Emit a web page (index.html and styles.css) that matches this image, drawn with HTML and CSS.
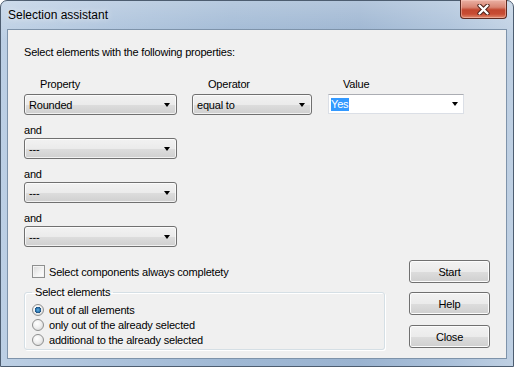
FILE: index.html
```html
<html lang="en">
<head>
  <meta charset="UTF-8">
  <title>Selection assistant</title>
  <link rel="stylesheet" href="styles.css">
</head>
<body>
  <div class="window">
    <div class="titlebar">
      <span class="title">Selection assistant</span>
      <button class="close-btn" title="Close">
        <svg width="13" height="11" viewBox="0 0 13 11">
          <path d="M2.5 1.5 L10.5 9.5 M10.5 1.5 L2.5 9.5" stroke="#4a1d15" stroke-width="4.2" stroke-linecap="round"/>
          <path d="M2.5 1.5 L10.5 9.5 M10.5 1.5 L2.5 9.5" stroke="#ffffff" stroke-width="2.4" stroke-linecap="round"/>
        </svg>
      </button>
    </div>

    <div class="client">
      <p class="intro">Select elements with the following properties:</p>

      <div class="criteria">
        <div class="field field-property">
          <span class="col-label">Property</span>
          <div class="combo combo-wide"><span>Rounded</span><i class="arrow"></i></div>
        </div>
        <div class="field field-operator">
          <span class="col-label">Operator</span>
          <div class="combo combo-op"><span>equal to</span><i class="arrow"></i></div>
        </div>
        <div class="field field-value">
          <span class="col-label">Value</span>
          <div class="combo-edit"><span class="selected-text">Yes</span><i class="arrow"></i></div>
        </div>
      </div>

      <div class="field and-field">
        <span class="and-label">and</span>
        <div class="combo combo-wide"><span>---</span><i class="arrow"></i></div>
      </div>
      <div class="field and-field">
        <span class="and-label">and</span>
        <div class="combo combo-wide"><span>---</span><i class="arrow"></i></div>
      </div>
      <div class="field and-field">
        <span class="and-label">and</span>
        <div class="combo combo-wide"><span>---</span><i class="arrow"></i></div>
      </div>

      <div class="bottom">
        <div class="left-col">
          <label class="check-row"><span class="checkbox"></span>Select components always completety</label>
          <fieldset class="group">
            <legend>Select elements</legend>
            <div class="radio-row"><span class="radio checked"></span>out of all elements</div>
            <div class="radio-row"><span class="radio"></span>only out of the already selected</div>
            <div class="radio-row"><span class="radio"></span>additional to the already selected</div>
          </fieldset>
        </div>
        <div class="buttons">
          <button class="btn">Start</button>
          <button class="btn">Help</button>
          <button class="btn">Close</button>
        </div>
      </div>
    </div>
  </div>
</body>
</html>
```

FILE: styles.css
```css
html,
body {
  margin: 0;
  background: #ffffff;
}

.window {
  width: 514px;
  height: 367px;
  box-sizing: border-box;
  display: flex;
  flex-direction: column;
  padding: 0 6px 7px 6px;
  border: 1px solid #4d5d70;
  border-radius: 7px 7px 0 0;
  background:
    linear-gradient(to bottom, rgba(255, 255, 255, 0.25), rgba(255, 255, 255, 0) 40px),
    linear-gradient(to right, #bccfe4 0%, #adc3dc 20%, #9fb8d4 45%, #9ab3d0 70%, #abc1da 88%, #bfd0e3 100%);
  font-family: "Liberation Sans", Arial, sans-serif;
  font-size: 11px;
  letter-spacing: -0.2px;
  color: #000;
}

.titlebar {
  height: 28px;
  display: flex;
  align-items: flex-start;
  justify-content: space-between;
}

.title {
  font-size: 12px;
  line-height: 15px;
  letter-spacing: 0;
  padding: 7px 0 0 1px;
  color: #000;
  text-shadow: 0 0 6px rgba(255, 255, 255, 0.9);
}

.close-btn {
  width: 47px;
  height: 19px;
  margin: -1px 0 0 0;
  padding: 0;
  display: flex;
  align-items: center;
  justify-content: center;
  border: 1px solid #5e2a21;
  border-top: none;
  border-radius: 0 0 4px 4px;
  background: linear-gradient(to bottom, #eab1a4 0%, #d98573 40%, #c2472f 55%, #c84c33 78%, #e08a6e 100%);
  box-shadow: inset 0 0 0 1px rgba(255, 210, 200, 0.45);
}

.client {
  flex: 1;
  display: flex;
  flex-direction: column;
  padding: 16px 16px 0 16px;
  border: 1px solid #7e93aa;
  background: #f0f0f0;
}

.intro {
  margin: 0;
  line-height: 13px;
}

.criteria {
  display: flex;
  margin-top: 19px;
}

.field {
  display: flex;
  flex-direction: column;
}

.field-operator {
  margin-left: 15px;
}

.field-value {
  margin-left: 16px;
}

.col-label {
  line-height: 13px;
  padding-left: 16px;
  margin-bottom: 3px;
}

.field-value .col-label {
  padding-left: 15px;
}

.and-field {
  margin-top: 9px;
}

.and-label {
  line-height: 13px;
  margin-bottom: 1px;
}

.combo {
  position: relative;
  height: 21px;
  box-sizing: border-box;
  display: flex;
  align-items: center;
  padding-left: 4px;
  border: 1px solid #707070;
  border-radius: 3px;
  background: linear-gradient(to bottom, #f2f2f2 0%, #ebebeb 50%, #dddddd 51%, #cfcfcf 100%);
  box-shadow: inset 0 0 0 1px rgba(255, 255, 255, 0.7);
}

.combo-wide {
  width: 153px;
}

.combo-op {
  width: 120px;
}

.combo-edit {
  position: relative;
  width: 136px;
  height: 20px;
  box-sizing: border-box;
  display: flex;
  align-items: center;
  padding-left: 2px;
  border: 1px solid #dbdfe6;
  border-top-color: #abadb3;
  background: #ffffff;
}

.selected-text {
  background: #3399ff;
  color: #ffffff;
  line-height: 13px;
  padding-right: 1px;
}

.arrow {
  position: absolute;
  right: 6px;
  top: 8px;
  width: 0;
  height: 0;
  border-left: 3.5px solid transparent;
  border-right: 3.5px solid transparent;
  border-top: 4px solid #000;
}

.combo-edit .arrow {
  right: 5px;
  top: 7px;
}

.bottom {
  display: flex;
  align-items: flex-start;
  margin-top: 13px;
}

.left-col {
  width: 361px;
  display: flex;
  flex-direction: column;
}

.check-row {
  display: flex;
  align-items: center;
  height: 15px;
  margin-top: 4px;
  padding-left: 8px;
}

.checkbox {
  width: 13px;
  height: 13px;
  box-sizing: border-box;
  margin-right: 4px;
  border: 1px solid #8e8f8f;
  background: linear-gradient(135deg, #d9d9d9 0%, #f4f4f4 60%, #ffffff 100%);
  box-shadow: inset 0 0 0 1px #f4f4f4;
}

.group {
  margin: 7px 0 0 0;
  padding: 3px 0 2px 7px;
  border: 1px solid #d5dfe5;
  border-radius: 3px;
  box-shadow: inset 1px 1px 0 #ffffff, 1px 1px 0 #ffffff;
  min-width: 0;
}

.group legend {
  padding: 0 3px;
  line-height: 13px;
}

.radio-row {
  display: flex;
  align-items: center;
  height: 15px;
}

.radio {
  width: 12px;
  height: 12px;
  box-sizing: border-box;
  margin-right: 5px;
  border: 1px solid #8e8f8f;
  border-radius: 50%;
  background: radial-gradient(circle at 40% 35%, #ffffff 0%, #f0f0f0 45%, #cfcfcf 100%);
}

.radio.checked {
  background:
    radial-gradient(circle at 50% 50%, #5fb4e8 0%, #2a6fa8 2.2px, #1d4f7c 3px, transparent 3.3px),
    radial-gradient(circle at 40% 35%, #ffffff 0%, #f0f0f0 45%, #cfcfcf 100%);
}

.buttons {
  margin-left: auto;
  display: flex;
  flex-direction: column;
  gap: 9px;
}

.btn {
  width: 81px;
  height: 23px;
  padding: 0;
  border: 1px solid #707070;
  border-radius: 3px;
  background: linear-gradient(to bottom, #f2f2f2 0%, #ebebeb 50%, #dddddd 51%, #cfcfcf 100%);
  box-shadow: inset 0 0 0 1px #fcfcfc;
  font-family: "Liberation Sans", Arial, sans-serif;
  font-size: 11px;
  letter-spacing: -0.2px;
  color: #000;
}

.btn:last-child {
  margin-top: 1px;
}
```
